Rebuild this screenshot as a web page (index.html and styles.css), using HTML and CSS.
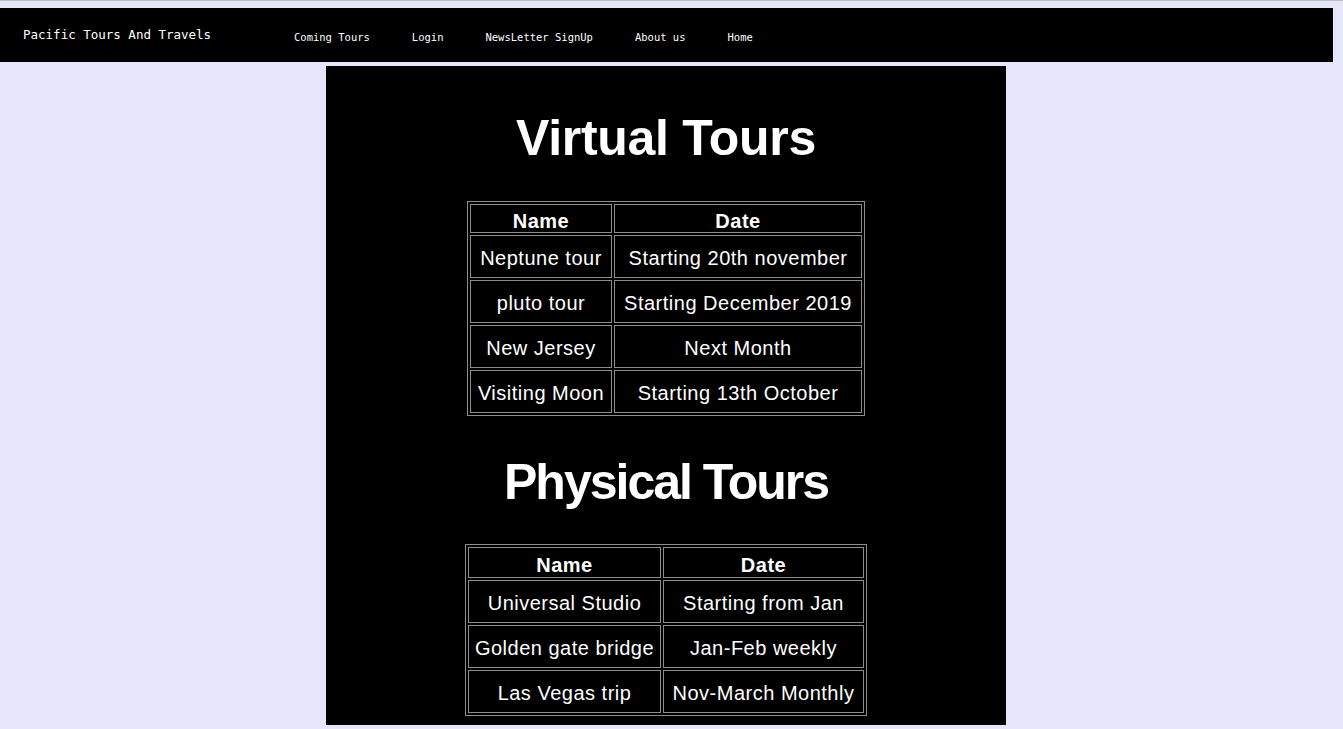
FILE: index.html
```html
<!DOCTYPE html>
<html lang="en">
<head>
<meta charset="utf-8">
<title>Pacific Tours And Travels</title>
<link rel="stylesheet" href="styles.css">
</head>
<body>
<div class="page">
  <nav class="navbar">
    <div class="brand">Pacific Tours And Travels</div>
    <ul class="links">
      <li>Coming Tours</li>
      <li>Login</li>
      <li>NewsLetter SignUp</li>
      <li>About us</li>
      <li>Home</li>
    </ul>
  </nav>
  <div class="content">
    <main class="box">
      <h1 class="title title-first">Virtual Tours</h1>
      <table class="tours tours-virtual">
        <tr class="head"><th class="c1">Name</th><th class="c2">Date</th></tr>
        <tr><td>Neptune tour</td><td>Starting 20th november</td></tr>
        <tr><td>pluto tour</td><td>Starting December 2019</td></tr>
        <tr><td>New Jersey</td><td>Next Month</td></tr>
        <tr><td>Visiting Moon</td><td>Starting 13th October</td></tr>
      </table>
      <h1 class="title title-second">Physical Tours</h1>
      <table class="tours tours-physical">
        <tr class="head"><th class="c1">Name</th><th class="c2">Date</th></tr>
        <tr><td>Universal Studio</td><td>Starting from Jan</td></tr>
        <tr><td>Golden gate bridge</td><td>Jan-Feb weekly</td></tr>
        <tr><td>Las Vegas trip</td><td>Nov-March Monthly</td></tr>
      </table>
    </main>
  </div>
</div>
</body>
</html>
```

FILE: styles.css
```css
html, body {
  margin: 0;
  padding: 0;
}
body {
  background: #e6e6fa;
  border-top: 1px solid #bdbdc4;
  padding-top: 7px;
  overflow: hidden;
}
.page {
  width: 1333px;
}
.navbar {
  height: 54px;
  background: #000;
  color: #fff;
  display: flex;
  align-items: center;
  padding-left: 23px;
  box-sizing: border-box;
  font-family: "DejaVu Sans Mono", "Liberation Mono", monospace;
}
.brand {
  width: 271px;
  font-size: 12.5px;
  white-space: nowrap;
  padding-bottom: 2px;
}
.links {
  display: flex;
  gap: 42px;
  list-style: none;
  margin: 0;
  padding: 4px 0 0 0;
  font-size: 10.5px;
}
.links li {
  white-space: nowrap;
}
.content {
  width: 1332px;
  display: flex;
  justify-content: center;
  padding-top: 4px;
}
.box {
  width: 680px;
  height: 659px;
  background: #000;
  color: #fff;
  display: flex;
  flex-direction: column;
  align-items: center;
  font-family: "Liberation Sans", Arial, sans-serif;
  box-sizing: border-box;
  padding-top: 43px;
}
.title {
  margin: 0;
  font-size: 50px;
  line-height: 58px;
  font-weight: bold;
}
.title-first {
  letter-spacing: -0.3px;
}
.title-second {
  margin-top: 37px;
  letter-spacing: -2px;
}
.tours {
  margin-top: 33px;
  border: 1px solid #8c8c8c;
  border-spacing: 2px;
  table-layout: fixed;
  box-sizing: border-box;
}
.tours-virtual {
  margin-top: 34px;
}
.tours th, .tours td {
  border: 1px solid #8c8c8c;
  box-sizing: border-box;
  padding: 4px 0 0 0;
  text-align: center;
  vertical-align: middle;
  font-size: 20px;
  letter-spacing: 0.5px;
  white-space: nowrap;
  height: 43px;
}
.tours .head th {
  height: 29px;
  font-weight: bold;
  padding-top: 4px;
  line-height: 22px;
}
.tours-virtual {
  width: 398px;
}
.tours-virtual .c1 { width: 142px; }
.tours-virtual .c2 { width: 248px; }
.tours-physical {
  width: 402px;
}
.tours-physical .head th {
  height: 31px;
}
.tours-physical .c1 { width: 193px; }
.tours-physical .c2 { width: 201px; }
```
